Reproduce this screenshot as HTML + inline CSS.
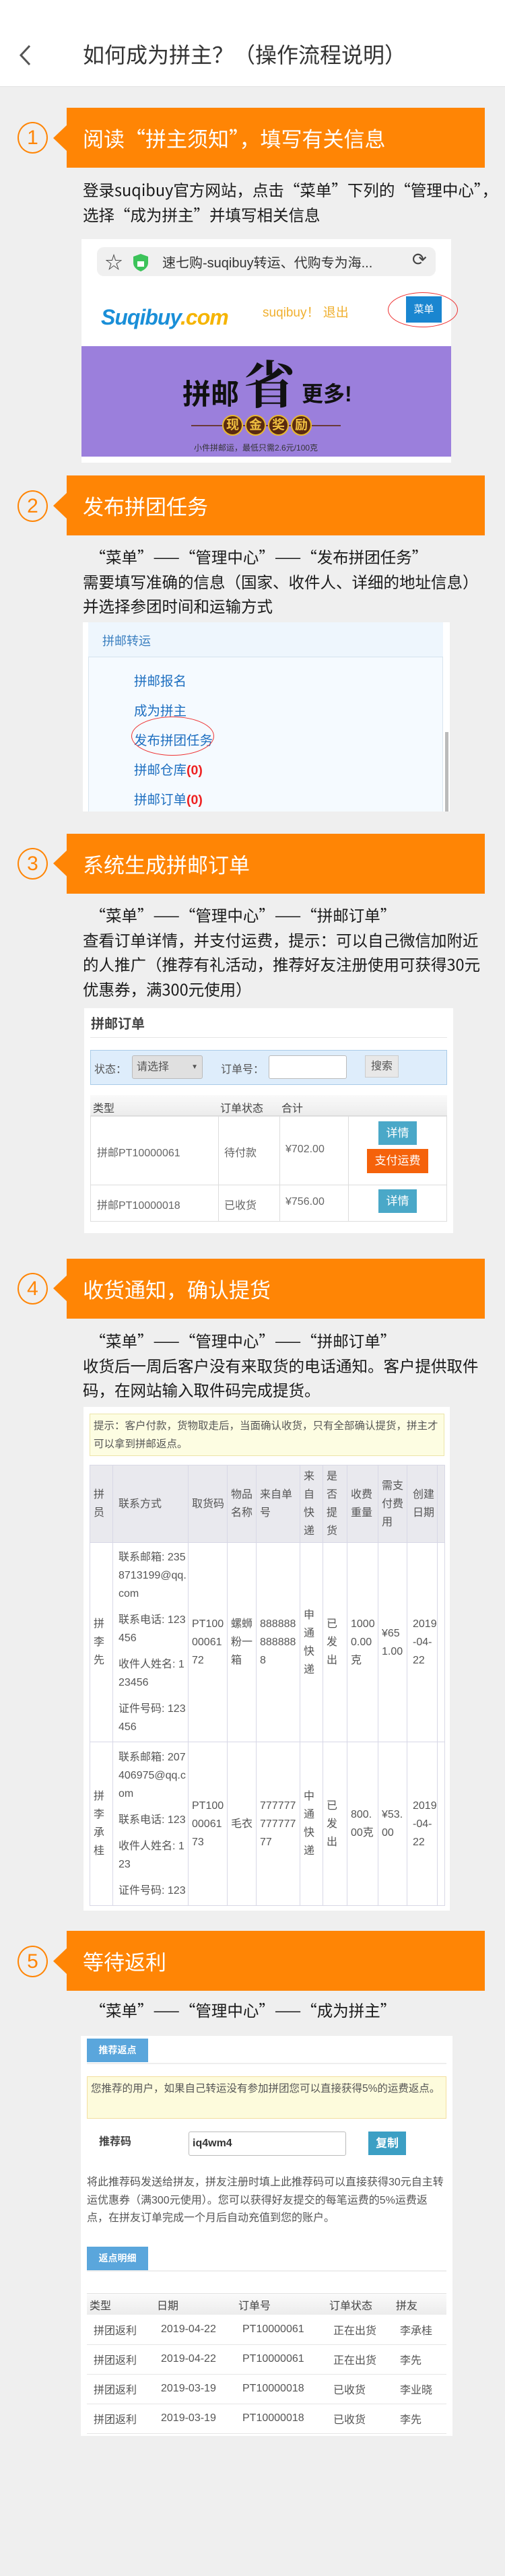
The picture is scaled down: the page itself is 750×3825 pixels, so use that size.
<!DOCTYPE html>
<html><head><meta charset="utf-8">
<style>
*{margin:0;padding:0;box-sizing:border-box}
body{width:750px;height:3825px;background:#efefef;font-family:"Liberation Sans","Noto Sans CJK SC",sans-serif;position:relative;overflow:hidden;color:#222}
.a{position:absolute}
.hdr{left:0;top:0;width:750px;height:129px;background:#fff;border-bottom:1px solid #e2e2e2}
.ban{left:99px;width:621px;height:89px;background:#ff8505;color:#fff;font-size:31px;line-height:89px;padding-left:24px;white-space:nowrap;font-family:"Noto Sans CJK SC",sans-serif}
.tri{width:0;height:0;border-top:19px solid transparent;border-bottom:19px solid transparent;border-right:20px solid #ff8505}
.num{width:45px;height:47px;border:2px solid #ff8505;border-radius:50%;color:#ff8505;font-size:30px;line-height:43px;text-align:center}
.p{left:123px;font-size:23.5px;line-height:36.5px;color:#1a1a1a;white-space:nowrap;font-family:"Noto Sans CJK SC",sans-serif}
.w{background:#fff}
table{border-collapse:collapse;table-layout:fixed}
.t4 td{border:1px solid #d8d8e6;font-size:16px;line-height:27px;color:#555;vertical-align:middle;padding:0 0 0 5px;word-break:break-all;overflow:hidden}
.t4 thead td{background:#e9e9ee;color:#555}
.t4 p{margin:0 0 12px}
.t4 p:last-child{margin:0}
.t5 td{font-size:16px;color:#555;height:44px;border-bottom:1px solid #e6e6e6;padding-left:10px}
.coin{display:inline-block;width:31px;height:31px;border-radius:50%;background:#5a2a10;border:2px solid #e8b830;color:#f0c040;font-size:19px;line-height:27px;text-align:center;font-weight:bold;margin-right:3px}
</style></head><body>

<div class="a hdr"></div>
<svg class="a" style="left:28px;top:66px" width="20" height="32" viewBox="0 0 20 32"><path d="M16 2 L3 16 L16 30" stroke="#555" stroke-width="3" fill="none"/></svg>
<div class="a" style="left:123px;top:62px;font-size:32px;line-height:40px;color:#333;white-space:nowrap">如何成为拼主？（操作流程说明）</div>

<!-- STEP 1 -->
<div class="a num" style="left:26px;top:181px">1</div>
<div class="a tri" style="left:79px;top:186px"></div>
<div class="a ban" style="top:160px">阅读“拼主须知”，填写有关信息</div>
<div class="a p" style="top:263px">登录suqibuy官方网站，点击“菜单”下列的“管理中心”，<br>选择“成为拼主”并填写相关信息</div>

<div class="a w" style="left:121px;top:355px;width:549px;height:332px"></div>
<div class="a" style="left:144px;top:367px;width:503px;height:43px;background:#f0f0f0;border-radius:10px"></div>
<div class="a" style="left:156px;top:370px;font-size:26px;color:#444">☆</div>
<svg class="a" style="left:197px;top:376px" width="24" height="28" viewBox="0 0 24 28"><path d="M12 1 L23 5 V14 C23 21 17 25 12 27 C7 25 1 21 1 14 V5 Z" fill="#3cc35a"/><rect x="7" y="12" width="10" height="8" fill="#fff"/></svg>
<div class="a" style="left:241px;top:374px;font-size:20px;color:#333;white-space:nowrap">速七购-suqibuy转运、代购专为海...</div>
<div class="a" style="left:612px;top:370px;font-size:26px;color:#444">⟳</div>
<div class="a" style="left:150px;top:453px;font-size:32px;font-weight:bold;font-style:italic;color:#1a8fd8;white-space:nowrap;letter-spacing:-1px">Suqibuy<span style="color:#f5b400">.com</span></div>
<div class="a" style="left:390px;top:449px;font-size:19px;color:#f0b030;white-space:nowrap">suqibuy！ 退出</div>
<div class="a" style="left:603px;top:440px;width:53px;height:39px;background:#1a86d0;color:#fff;font-size:15px;line-height:39px;text-align:center">菜单</div>
<div class="a" style="left:576px;top:434px;width:104px;height:52px;border:1px solid #e33;border-radius:50%"></div>
<div class="a" style="left:121px;top:514px;width:549px;height:164px;background:#9b7fdc"></div>
<div class="a" style="left:271px;top:562px;font-size:42px;line-height:48px;font-weight:bold;color:#111;white-space:nowrap">拼邮</div>
<div class="a" style="left:362px;top:522px;font-size:76px;line-height:90px;font-weight:bold;color:#111;font-family:'Noto Serif CJK SC',serif">省</div>
<div class="a" style="left:448px;top:566px;font-size:32px;line-height:38px;font-weight:bold;color:#111;white-space:nowrap">更多!</div>
<div class="a" style="left:284px;top:631px;width:222px;height:2px;background:#6a3a3a"></div>
<div class="a" style="left:330px;top:616px;white-space:nowrap;height:33px"><span class="coin">现</span><span class="coin">金</span><span class="coin">奖</span><span class="coin">励</span></div>
<div class="a" style="left:288px;top:656px;font-size:12px;color:#333;white-space:nowrap">小件拼邮运，最低只需2.6元/100克</div>

<!-- STEP 2 -->
<div class="a num" style="left:26px;top:728px">2</div>
<div class="a tri" style="left:79px;top:732px"></div>
<div class="a ban" style="top:706px">发布拼团任务</div>
<div class="a p" style="top:808px">&nbsp;&nbsp;“菜单”——“管理中心”——“发布拼团任务”<br>需要填写准确的信息（国家、收件人、详细的地址信息）<br>并选择参团时间和运输方式</div>

<div class="a w" style="left:123px;top:924px;width:545px;height:281px"></div>
<div class="a" style="left:131px;top:924px;width:527px;height:281px;background:#f5faff;border-left:1px solid #d8e5ef;border-right:1px solid #d8e5ef"></div>
<div class="a" style="left:131px;top:924px;width:527px;height:52px;border-bottom:1px solid #d3e2ee;background:#eef6fd"></div>
<div class="a" style="left:152px;top:938px;font-size:18px;color:#3a7fc0">拼邮转运</div>
<div class="a" style="left:199px;top:990px;font-size:19.5px;line-height:44px;color:#1e6fc0;white-space:nowrap">拼邮报名<br>成为拼主<br>发布拼团任务<br>拼邮仓库<b style="color:#e22">(0)</b><br>拼邮订单<b style="color:#e22">(0)</b></div>
<div class="a" style="left:195px;top:1064px;width:123px;height:58px;border:1px solid #e33;border-radius:50%"></div>
<div class="a" style="left:661px;top:1087px;width:5px;height:118px;background:#bbb"></div>

<!-- STEP 3 -->
<div class="a num" style="left:26px;top:1259px">3</div>
<div class="a tri" style="left:79px;top:1263px"></div>
<div class="a ban" style="top:1238px">系统生成拼邮订单</div>
<div class="a p" style="top:1340px">&nbsp;&nbsp;“菜单”——“管理中心”——“拼邮订单”<br>查看订单详情，并支付运费，提示：可以自己微信加附近<br>的人推广（推荐有礼活动，推荐好友注册使用可获得30元<br>优惠券，满300元使用）</div>

<div class="a w" style="left:125px;top:1497px;width:548px;height:334px"></div>
<div class="a" style="left:135px;top:1504px;font-size:20px;font-weight:bold;color:#444">拼邮订单</div>
<div class="a" style="left:134px;top:1540px;width:530px;height:1px;background:#e6e6e6"></div>
<div class="a" style="left:134px;top:1559px;width:530px;height:52px;background:#deedfb;border:1px solid #a9cbe8"></div>
<div class="a" style="left:140px;top:1574px;font-size:16px;color:#555">状态：</div>
<div class="a" style="left:196px;top:1567px;width:105px;height:35px;background:#e0e0e0;border:1px solid #bbb;border-radius:3px;font-size:16px;color:#555;line-height:33px;padding-left:6px">请选择<span style="float:right;margin-right:6px;font-size:10px">▼</span></div>
<div class="a" style="left:328px;top:1574px;font-size:16px;color:#555">订单号：</div>
<div class="a" style="left:399px;top:1567px;width:116px;height:35px;background:#fff;border:1px solid #bbb;border-radius:3px"></div>
<div class="a" style="left:542px;top:1567px;width:50px;height:33px;background:#e8e8e8;border:1px solid #ccc;font-size:16px;color:#555;line-height:31px;text-align:center">搜索</div>
<div class="a" style="left:134px;top:1626px;width:530px;height:188px;border:1px solid #ddd"></div>
<div class="a" style="left:134px;top:1626px;width:530px;height:32px;background:linear-gradient(#fafafa,#ececec);border-bottom:2px solid #ddd"></div>
<div class="a" style="left:138px;top:1632px;font-size:16px;color:#444">类型</div>
<div class="a" style="left:327px;top:1632px;font-size:16px;color:#444">订单状态</div>
<div class="a" style="left:418px;top:1632px;font-size:16px;color:#444">合计</div>
<div class="a" style="left:134px;top:1759px;width:530px;height:1px;background:#ddd"></div>
<div class="a" style="left:324px;top:1658px;width:1px;height:156px;background:#ddd"></div>
<div class="a" style="left:415px;top:1658px;width:1px;height:156px;background:#ddd"></div>
<div class="a" style="left:517px;top:1658px;width:1px;height:156px;background:#ddd"></div>
<div class="a" style="left:144px;top:1698px;font-size:16px;color:#666">拼邮PT10000061</div>
<div class="a" style="left:333px;top:1698px;font-size:16px;color:#666">待付款</div>
<div class="a" style="left:424px;top:1698px;font-size:16px;color:#666">¥702.00</div>
<div class="a" style="left:562px;top:1665px;width:57px;height:35px;background:#4aa8c8;color:#fff;font-size:17px;line-height:35px;text-align:center">详情</div>
<div class="a" style="left:545px;top:1706px;width:91px;height:36px;background:#f5620b;color:#fff;font-size:17px;line-height:36px;text-align:center">支付运费</div>
<div class="a" style="left:144px;top:1776px;font-size:16px;color:#666">拼邮PT10000018</div>
<div class="a" style="left:333px;top:1776px;font-size:16px;color:#666">已收货</div>
<div class="a" style="left:424px;top:1776px;font-size:16px;color:#666">¥756.00</div>
<div class="a" style="left:562px;top:1766px;width:57px;height:35px;background:#4aa8c8;color:#fff;font-size:17px;line-height:35px;text-align:center">详情</div>

<!-- STEP 4 -->
<div class="a num" style="left:26px;top:1890px">4</div>
<div class="a tri" style="left:79px;top:1894px"></div>
<div class="a ban" style="top:1869px">收货通知，确认提货</div>
<div class="a p" style="top:1972px">&nbsp;&nbsp;“菜单”——“管理中心”——“拼邮订单”<br>收货后一周后客户没有来取货的电话通知。客户提供取件<br>码，在网站输入取件码完成提货。</div>

<div class="a w" style="left:124px;top:2089px;width:544px;height:748px"></div>
<div class="a" style="left:133px;top:2099px;width:527px;height:63px;background:#fdfde2;border:1px solid #ece5a8;font-size:15.5px;line-height:27px;color:#555;padding:4px 5px">提示：客户付款，货物取走后，当面确认收货，只有全部确认提货，拼主才可以拿到拼邮返点。</div>
<table class="a t4" style="left:133px;top:2175px;width:527px">
<colgroup><col style="width:34px"><col style="width:112px"><col style="width:58px"><col style="width:43px"><col style="width:65px"><col style="width:34px"><col style="width:36px"><col style="width:46px"><col style="width:43px"><col style="width:45px"><col style="width:11px"></colgroup>
<thead><tr style="height:115px"><td>拼员</td><td style="padding-left:8px">联系方式</td><td>取货码</td><td>物品名称</td><td>来自单号</td><td>来自快递</td><td>是否提货</td><td>收费重量</td><td>需支付费用</td><td style="padding-left:8px">创建日期</td><td></td></tr></thead>
<tbody>
<tr style="height:296px"><td>拼李先</td><td style="padding-left:8px"><p>联系邮箱: 2358713199@qq.com</p><p>联系电话: 123456</p><p>收件人姓名: 123456</p><p>证件号码: 123456</p></td><td>PT1000006172</td><td>螺蛳粉一箱</td><td>8888888888888</td><td>申通快递</td><td>已发出</td><td>10000.00克</td><td>¥651.00</td><td style="padding-left:8px">2019-04-22</td><td></td></tr>
<tr style="height:243px"><td>拼李承桂</td><td style="padding-left:8px"><p>联系邮箱: 207406975@qq.com</p><p>联系电话: 123</p><p>收件人姓名: 123</p><p>证件号码: 123</p></td><td>PT1000006173</td><td>毛衣</td><td>77777777777777</td><td>中通快递</td><td>已发出</td><td>800.00克</td><td>¥53.00</td><td style="padding-left:8px">2019-04-22</td><td></td></tr>
</tbody></table>

<!-- STEP 5 -->
<div class="a num" style="left:26px;top:2889px">5</div>
<div class="a tri" style="left:79px;top:2893px"></div>
<div class="a ban" style="top:2867px">等待返利</div>
<div class="a p" style="top:2966px">&nbsp;&nbsp;“菜单”——“管理中心”——“成为拼主”</div>

<div class="a w" style="left:120px;top:3023px;width:552px;height:594px"></div>
<div class="a" style="left:129px;top:3027px;width:91px;height:35px;background:#5aa6dc;color:#fff;font-size:14px;font-weight:bold;line-height:35px;text-align:center">推荐返点</div>
<div class="a" style="left:129px;top:3063px;width:534px;height:2px;background:#eee"></div>
<div class="a" style="left:129px;top:3083px;width:534px;height:63px;background:#fdfbdc;border:1px solid #f3dfa0;font-size:15.5px;line-height:25px;color:#555;padding:5px 5px">您推荐的用户，如果自己转运没有参加拼团您可以直接获得5%的运费返点。</div>
<div class="a" style="left:147px;top:3166px;font-size:16px;font-weight:bold;color:#444">推荐码</div>
<div class="a" style="left:280px;top:3165px;width:234px;height:36px;border:1px solid #bbb;border-radius:3px;background:#fff;font-size:16px;font-weight:bold;color:#333;line-height:34px;padding-left:5px">iq4wm4</div>
<div class="a" style="left:547px;top:3165px;width:56px;height:35px;background:#3c9fc4;color:#fff;font-size:17px;font-weight:bold;line-height:35px;text-align:center">复制</div>
<div class="a" style="left:129px;top:3228px;width:535px;font-size:16px;line-height:26.5px;color:#555">将此推荐码发送给拼友，拼友注册时填上此推荐码可以直接获得30元自主转运优惠券（满300元使用）。您可以获得好友提交的每笔运费的5%运费返点，在拼友订单完成一个月后自动充值到您的账户。</div>
<div class="a" style="left:129px;top:3336px;width:91px;height:35px;background:#5aa6dc;color:#fff;font-size:14px;font-weight:bold;line-height:35px;text-align:center">返点明细</div>
<div class="a" style="left:129px;top:3371px;width:534px;height:2px;background:#eee"></div>
<div class="a" style="left:129px;top:3405px;width:534px;height:32px;background:linear-gradient(#fafafa,#ececec);border-top:1px solid #e3e3e3"></div>
<div class="a" style="left:133px;top:3410px;font-size:16px;color:#444">类型</div>
<div class="a" style="left:233px;top:3410px;font-size:16px;color:#444">日期</div>
<div class="a" style="left:354px;top:3410px;font-size:16px;color:#444">订单号</div>
<div class="a" style="left:489px;top:3410px;font-size:16px;color:#444">订单状态</div>
<div class="a" style="left:588px;top:3410px;font-size:16px;color:#444">拼友</div>
<table class="a t5" style="left:129px;top:3437px;width:534px">
<colgroup><col style="width:100px"><col style="width:121px"><col style="width:135px"><col style="width:99px"><col style="width:79px"></colgroup>
<tr><td>拼团返利</td><td>2019-04-22</td><td>PT10000061</td><td>正在出货</td><td>李承桂</td></tr>
<tr><td>拼团返利</td><td>2019-04-22</td><td>PT10000061</td><td>正在出货</td><td>李先</td></tr>
<tr><td>拼团返利</td><td>2019-03-19</td><td>PT10000018</td><td>已收货</td><td>李业晓</td></tr>
<tr><td>拼团返利</td><td>2019-03-19</td><td>PT10000018</td><td>已收货</td><td>李先</td></tr>
</table>
</body></html>
